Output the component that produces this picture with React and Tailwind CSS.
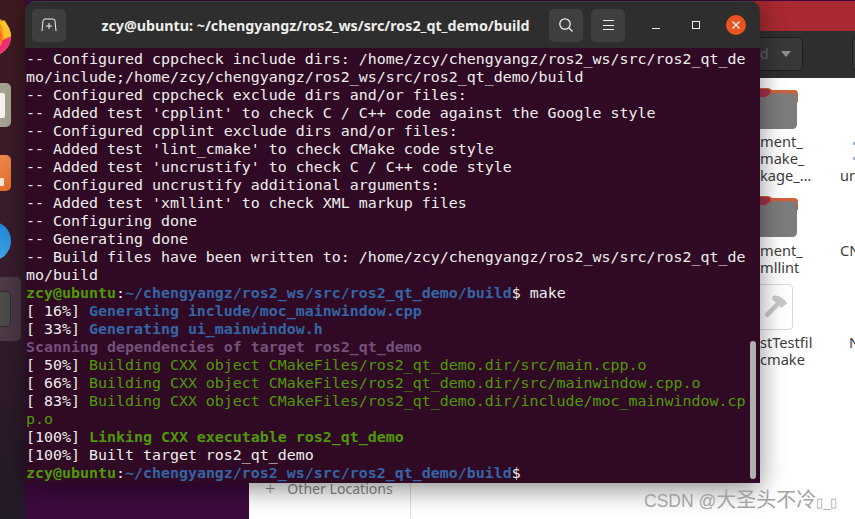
const W = ({ children }) => <span className="text-[#eeeeec]">{children}</span>;
const B = ({ children }) => <span className="text-[#3465a4] font-bold">{children}</span>;
const G = ({ children }) => <span className="text-[#4e9a06]">{children}</span>;
const GB = ({ children }) => <span className="text-[#4e9a06] font-bold">{children}</span>;

const Prompt = ({ tail }) => (
  <div>
    <GB>zcy@ubuntu</GB><W>:</W><B>~/chengyangz/ros2_ws/src/ros2_qt_demo/build</B><W>$ {tail}</W>
  </div>
);

const plain = [
  "-- Configured cppcheck include dirs: /home/zcy/chengyangz/ros2_ws/src/ros2_qt_de",
  "mo/include;/home/zcy/chengyangz/ros2_ws/src/ros2_qt_demo/build",
  "-- Configured cppcheck exclude dirs and/or files:",
  "-- Added test 'cpplint' to check C / C++ code against the Google style",
  "-- Configured cpplint exclude dirs and/or files:",
  "-- Added test 'lint_cmake' to check CMake code style",
  "-- Added test 'uncrustify' to check C / C++ code style",
  "-- Configured uncrustify additional arguments:",
  "-- Added test 'xmllint' to check XML markup files",
  "-- Configuring done",
  "-- Generating done",
  "-- Build files have been written to: /home/zcy/chengyangz/ros2_ws/src/ros2_qt_de",
  "mo/build",
];

function FolderIcon({ className }) {
  return (
    <svg viewBox="0 0 60 40" preserveAspectRatio="none" className={className}>
      <path d="M0 2 Q0 0 3 0 H30 L34 2 H56 Q60 2 60 6 V14 H0 Z" fill="#d0603a" />
      <path d="M0 1 H28 Q32 1 32 4 V5 L27 9 H0 Z" fill="#a6324a" />
      <path d="M0 9 H27 L33 5 H56 Q59 5 59 8 V35 Q59 40 54 40 H0 Z" fill="#7c7c7c" />
    </svg>
  );
}

function FileLabel({ className, lines }) {
  return (
    <div className={`absolute text-[14.6px] leading-[17px] text-[#3d3d3d] whitespace-pre ${className}`}>
      {lines.map((l) => <div key={l}>{l}</div>)}
    </div>
  );
}

function Dock() {
  return (
    <div className="absolute left-0 top-0 h-[519px] w-[25px] bg-gradient-to-b from-[#3f1a20] via-[#3a1c2e] to-[#231a28] overflow-hidden">
      {/* firefox */}
      <svg viewBox="0 0 40 40" className="absolute left-[-28px] top-[17px] w-[39px] h-[39px]">
        <circle cx="20" cy="20" r="20" fill="#ff9a1e" />
        <path d="M40 20 A20 20 0 0 1 12 38 Q28 38 31 24 Z" fill="#f5307a" />
        <path d="M33 3 Q40 12 40 20 L32 22 Q34 12 28 6 Z" fill="#ffcb2e" />
        <circle cx="22" cy="20" r="9" fill="#ff6a1e" />
      </svg>
      {/* files */}
      <div className="absolute left-[-20px] top-[83px] w-[31px] h-[44px] rounded-[5px] bg-[#a8a493] flex items-center justify-end pr-[6px]">
        <div className="w-[12px] h-[25px] bg-[#f6f5f2] rounded-[2px]" />
      </div>
      {/* software */}
      <div className="absolute left-[-28px] top-[155px] w-[39px] h-[36px] rounded-[5px] bg-gradient-to-b from-[#f08a4b] to-[#e86f2c] flex items-end justify-end pr-[7px] pb-[5px]">
        <div className="w-[4px] h-[8px] bg-[#f8e8da] rounded-[1px]" />
      </div>
      {/* help */}
      <div className="absolute left-[-30px] top-[221px] w-[41px] h-[40px] rounded-full bg-gradient-to-b from-[#1b85d8] to-[#43a8ea]" />
      {/* active */}
      <div className="absolute left-[-10px] top-[277px] w-[31px] h-[64px] rounded-[5px] bg-[#4f3a48]" />
      <div className="absolute left-[-10px] top-[291px] w-[21px] h-[36px] rounded-[5px] bg-[#4c4c4a] border border-[#2f2f2f]" />
    </div>
  );
}

function FileManager() {
  return (
    <div className="absolute left-[249px] top-[1px] w-[606px] h-[518px] bg-white overflow-hidden flex flex-col">
      <div className="h-[30px] bg-[#a8292f] shrink-0" />
      <div className="h-[47px] bg-[#2f2f2f] shrink-0 relative">
        <div className="absolute left-[497px] top-[6px] w-[57px] h-[34px] border border-[#1f1f1f] rounded-[5px] bg-[#383838] flex items-center justify-end pr-[11px]">
          <span className="w-0 h-0 border-l-[5px] border-r-[5px] border-t-[6px] border-l-transparent border-r-transparent border-t-[#8f8f8f]" />
        </div>
        <div className="absolute left-[511px] top-[14px] text-[14px] leading-[17px] text-[#666] font-['Noto_Sans']">d</div>
        <div className="absolute left-[603px] top-[6px] w-[10px] h-[34px] border border-[#1f1f1f] rounded-[5px] bg-[#383838]" />
      </div>
      <div className="flex-1 relative font-['Noto_Sans','DejaVu_Sans',sans-serif]">
        <FolderIcon className="absolute left-[490px] top-[10px] w-[59px] h-[41px]" />
        <FileLabel className="left-[511px] top-[55px]" lines={["ment_", "make_", "kage_…"]} />
        <FileLabel className="left-[591px] top-[89px]" lines={["un"]} />
        <div className="absolute left-[604px] top-[64px] w-[2px] h-[3px] bg-[#9fb4d8]" />
        <div className="absolute left-[604px] top-[79px] w-[2px] h-[3px] bg-[#9fb4d8]" />
        <FolderIcon className="absolute left-[490px] top-[118px] w-[59px] h-[41px]" />
        <FileLabel className="left-[511px] top-[164px]" lines={["ment_", "mllint"]} />
        <FileLabel className="left-[591px] top-[164px]" lines={["CN"]} />
        <div className="absolute left-[505px] top-[206px] w-[39px] h-[46px] border border-[#d8d8d8] rounded-[4px] bg-white flex items-center justify-center">
          <svg viewBox="0 0 39 46" className="w-[39px] h-[46px]">
            <path d="M13 31 L24 20" stroke="#c9c9c9" strokeWidth="5" strokeLinecap="round" />
            <path d="M19 12 Q26 10 33 19 L28 23 L24 19 L19 15 Z" fill="#c9c9c9" stroke="#c9c9c9" strokeWidth="1.5" strokeLinejoin="round" />
          </svg>
        </div>
        <FileLabel className="left-[511px] top-[256px]" lines={["stTestfil", "cmake"]} />
        <FileLabel className="left-[600px] top-[256px]" lines={["N"]} />
        <div className="absolute left-[161px] top-[400px] w-[1px] h-[40px] bg-[#dcdcdc]" />
        <div className="absolute left-[16px] top-[402px] flex items-center gap-[12px] text-[14.1px] leading-[17px] text-[#8a8a8a]">
          <span className="text-[18px] font-light leading-[17px]">+</span>
          <span>Other Locations</span>
        </div>
      </div>
    </div>
  );
}

function TitleButton({ children, className = "" }) {
  return (
    <div className={`w-[34px] h-[33px] rounded-[5px] bg-[#3f3f3f] flex items-center justify-center shrink-0 ${className}`}>
      {children}
    </div>
  );
}

function Terminal() {
  return (
    <div className="absolute left-[25px] top-[1px] w-[735px] h-[482px] rounded-t-[10px] overflow-hidden flex flex-col shadow-[0_6px_26px_rgba(0,0,0,0.45)]">
      <div className="h-[47px] bg-[#2e2e2e] shrink-0 flex items-center pl-[7px] pr-[14px] border-t border-[#3c3c3c]">
        <TitleButton>
          <svg viewBox="0 0 16 16" className="w-[16px] h-[16px]" fill="none" stroke="#f0f0f0" strokeWidth="1">
            <path d="M1 14 L2 4 Q2 2 4 2 H12 Q14 2 14 4 L15 14" />
            <path d="M8 6 V12 M5 9 H11" />
          </svg>
        </TitleButton>
        <div className="flex-1 min-w-0 text-center whitespace-pre text-[14.27px] leading-[17px] font-bold text-[#eeeeec] font-['Noto_Sans','DejaVu_Sans',sans-serif] pl-[16px]">
          zcy@ubuntu: ~/chengyangz/ros2_ws/src/ros2_qt_demo/build
        </div>
        <TitleButton>
          <svg viewBox="0 0 16 16" className="w-[16px] h-[16px]" fill="none" stroke="#eeeeec" strokeWidth="1.3">
            <circle cx="7" cy="7" r="5.2" />
            <path d="M11 11 L14.5 14.5" />
          </svg>
        </TitleButton>
        <TitleButton className="ml-[8px] flex-col gap-[3.5px]">
          <span className="w-[11px] h-[1px] bg-[#eeeeec]" />
          <span className="w-[11px] h-[1px] bg-[#eeeeec]" />
          <span className="w-[11px] h-[1px] bg-[#eeeeec]" />
        </TitleButton>
        <span className="ml-[27px] w-[8px] h-[1px] bg-[#eeeeec] mt-[7px]" />
        <span className="ml-[32px] w-[8px] h-[8px] border border-[#eeeeec]" />
        <div className="ml-[26px] w-[20px] h-[20px] rounded-full bg-[#e95420] flex items-center justify-center">
          <svg viewBox="0 0 10 10" className="w-[10px] h-[10px]" stroke="#fff" strokeWidth="1.2">
            <path d="M1.5 1.5 L8.5 8.5 M8.5 1.5 L1.5 8.5" />
          </svg>
        </div>
      </div>
      <div className="flex-1 bg-[#300a24] relative pl-[1px] pt-[2px] text-[14.95px] leading-[18px] whitespace-pre font-['DejaVu_Sans_Mono',monospace] text-[#eeeeec]">
        {plain.map((l, i) => <div key={i}>{l}</div>)}
        <Prompt tail="make" />
        <div><W>[ 16%] </W><B>Generating include/moc_mainwindow.cpp</B></div>
        <div><W>[ 33%] </W><B>Generating ui_mainwindow.h</B></div>
        <div className="font-bold text-[#75507b]">Scanning dependencies of target ros2_qt_demo</div>
        <div><W>[ 50%] </W><G>Building CXX object CMakeFiles/ros2_qt_demo.dir/src/main.cpp.o</G></div>
        <div><W>[ 66%] </W><G>Building CXX object CMakeFiles/ros2_qt_demo.dir/src/mainwindow.cpp.o</G></div>
        <div><W>[ 83%] </W><G>Building CXX object CMakeFiles/ros2_qt_demo.dir/include/moc_mainwindow.cp</G></div>
        <div><G>p.o</G></div>
        <div><W>[100%] </W><GB>Linking CXX executable ros2_qt_demo</GB></div>
        <div><W>[100%] Built target ros2_qt_demo</W></div>
        <Prompt tail="" />
        <div className="absolute right-[4px] bottom-[4px] w-[6px] h-[138px] rounded-[3px] bg-[#b3b0b1]" />
      </div>
    </div>
  );
}

export default function App() {
  return (
    <div className="relative w-[855px] h-[519px] overflow-hidden bg-[#3d0a3e]">
      <Dock />
      <FileManager />
      <Terminal />
      <div className="absolute left-[644px] top-[489px] text-[17.5px] leading-[22px] text-[#a3a3a3] whitespace-pre font-['Liberation_Sans','Noto_Sans_CJK_SC',sans-serif]">
        CSDN @<span className="text-[20px]">大圣头不冷</span><span className="text-[13px]">▯_▯</span>
      </div>
    </div>
  );
}
